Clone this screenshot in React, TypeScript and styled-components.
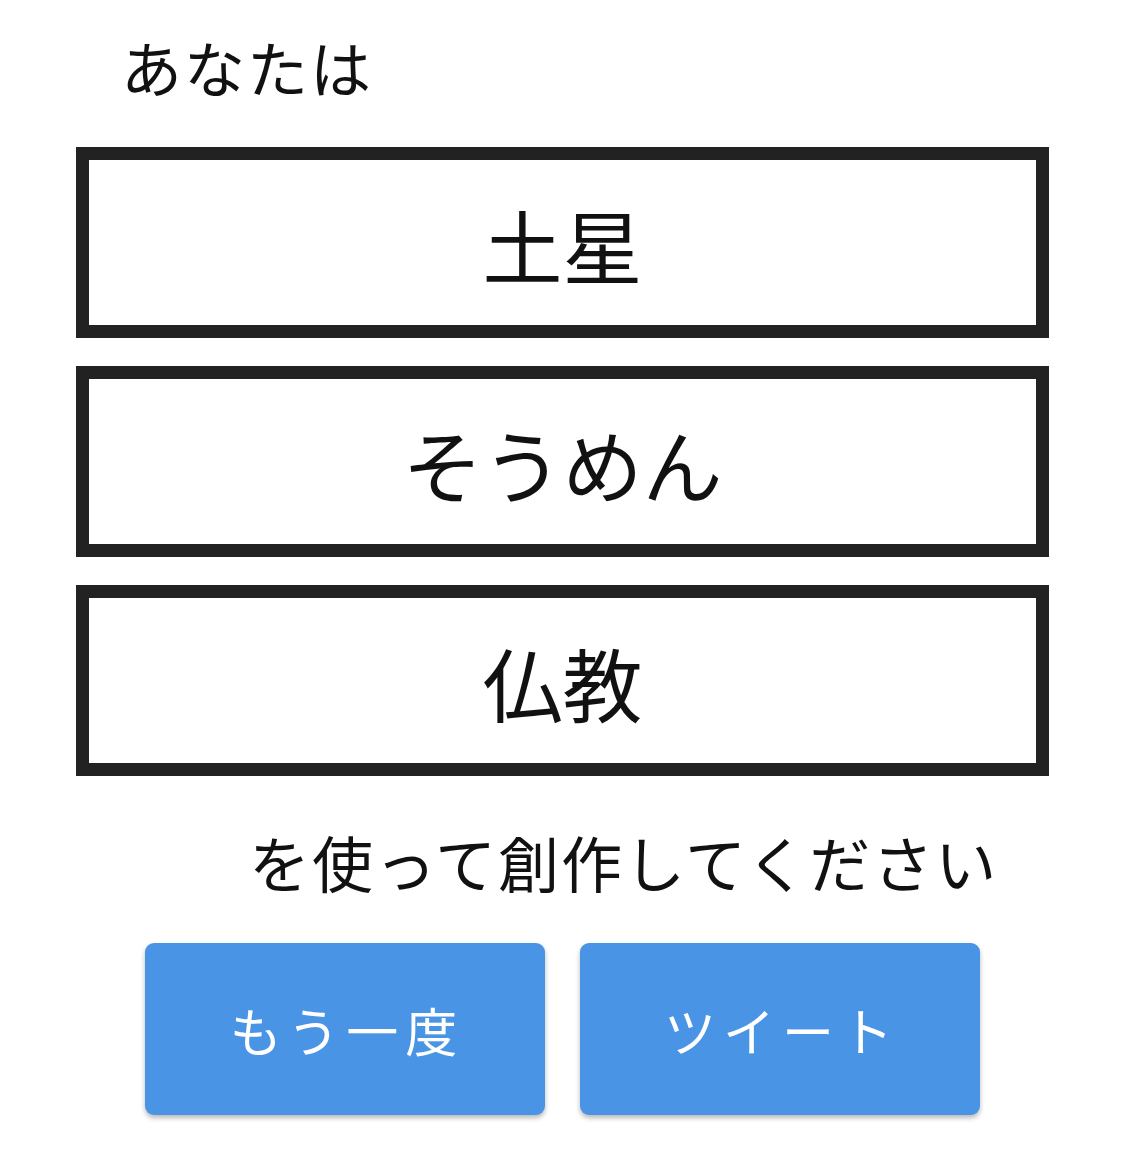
import React from "react";
import styled, { createGlobalStyle } from "styled-components";

const GlobalStyle = createGlobalStyle`
  html, body {
    margin: 0;
    padding: 0;
    background: #ffffff;
  }
  body {
    font-family: "Noto Sans CJK JP", "Noto Sans", sans-serif;
    color: #111111;
  }
`;

const Page = styled.div`
  width: 1125px;
  min-height: 1164px;
  box-sizing: border-box;
  padding: 37px 76px 0 76px;
  display: flex;
  flex-direction: column;
`;

const Lead = styled.div`
  font-size: 61px;
  line-height: 60px;
  margin-left: 45px;
  letter-spacing: 2px;
`;

const Words = styled.div`
  margin-top: 50px;
  display: flex;
  flex-direction: column;
  gap: 28px;
`;

const WordBox = styled.div`
  height: 191px;
  box-sizing: border-box;
  border: 13px solid #222222;
  display: flex;
  align-items: center;
  justify-content: center;
  font-size: 80px;
  line-height: 80px;
  color: #111111;
`;

const Tail = styled.div`
  margin-top: 56px;
  margin-left: 173px;
  font-size: 61px;
  line-height: 60px;
  letter-spacing: 2px;
`;

const Actions = styled.div`
  margin-top: 51px;
  display: flex;
  justify-content: center;
  gap: 35px;
  margin-left: -76px;
  margin-right: -76px;
`;

const ActionButton = styled.button`
  width: 400px;
  height: 172px;
  border: none;
  border-radius: 9px;
  background: #4a94e6;
  color: #ffffff;
  font-family: "Noto Sans CJK JP", "Noto Sans", sans-serif;
  font-size: 52px;
  letter-spacing: 7px;
  padding: 0 0 0 4px;
  box-shadow: 0 3px 5px rgba(0, 0, 0, 0.28);
  display: flex;
  align-items: center;
  justify-content: center;
  cursor: pointer;
`;

const words = ["土星", "そうめん", "仏教"];

export default function App() {
  return (
    <>
      <GlobalStyle />
      <Page>
        <Lead>あなたは</Lead>
        <Words>
          {words.map((w) => (
            <WordBox key={w}>{w}</WordBox>
          ))}
        </Words>
        <Tail>を使って創作してください</Tail>
        <Actions>
          <ActionButton>もう一度</ActionButton>
          <ActionButton>ツイート</ActionButton>
        </Actions>
      </Page>
    </>
  );
}
